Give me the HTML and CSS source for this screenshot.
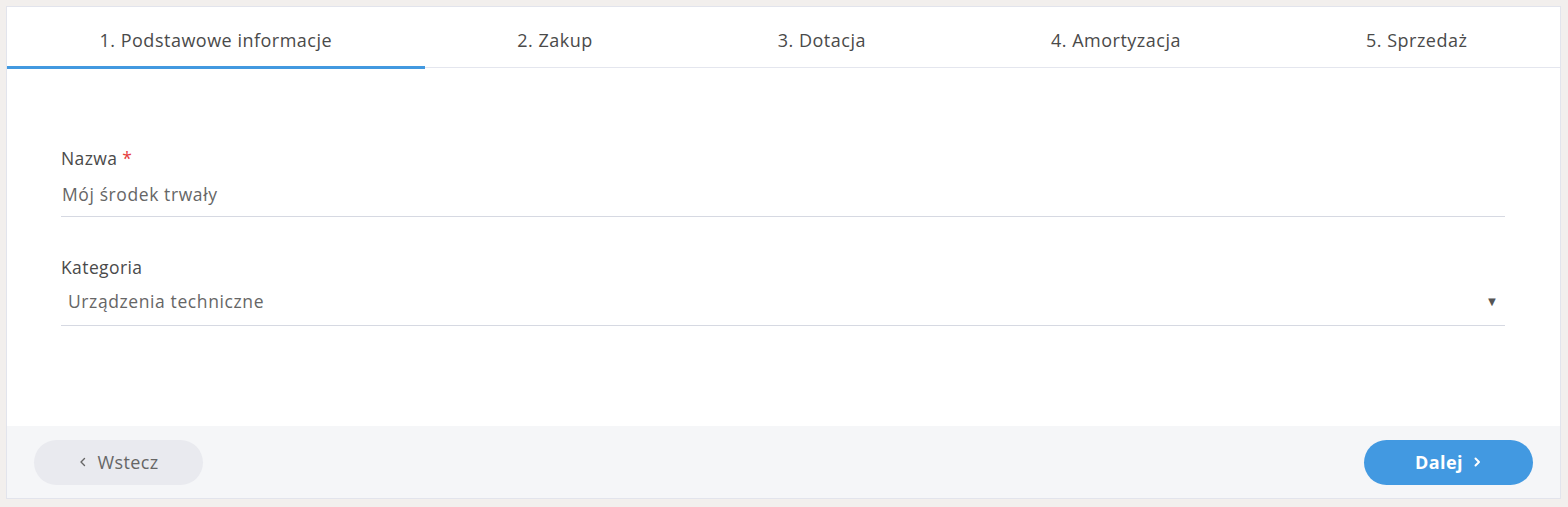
FILE: index.html
```html
<!DOCTYPE html>
<html lang="pl">
<head>
<meta charset="utf-8">
<title>Środek trwały</title>
<link rel="stylesheet" href="styles.css">
</head>
<body>
<div class="card">
  <nav class="tabs">
    <div class="tab active">1. Podstawowe informacje</div>
    <div class="tab">2. Zakup</div>
    <div class="tab">3. Dotacja</div>
    <div class="tab">4. Amortyzacja</div>
    <div class="tab">5. Sprzedaż</div>
  </nav>
  <div class="content">
    <div class="field">
      <div class="label">Nazwa <span class="req">*</span></div>
      <div class="input">Mój środek trwały</div>
    </div>
    <div class="field">
      <div class="label">Kategoria</div>
      <div class="input select"><span class="sel-val">Urządzenia techniczne</span><span class="arrow">▼</span></div>
    </div>
  </div>
  <div class="footer">
    <button class="btn back"><svg class="chev-svg" width="10" height="12" viewBox="0 0 10 12"><path d="M6.5 2.5 L3 6 L6.5 9.5" fill="none" stroke="#666" stroke-width="1.4" stroke-linecap="round" stroke-linejoin="round"/></svg> Wstecz</button>
    <button class="btn next">Dalej <svg class="chev-svg" width="10" height="12" viewBox="0 0 10 12"><path d="M3.5 2.5 L7 6 L3.5 9.5" fill="none" stroke="#fff" stroke-width="2" stroke-linecap="round" stroke-linejoin="round"/></svg></button>
  </div>
</div>
</body>
</html>
```
FILE: styles.css
```css
html, body {
  margin: 0;
  padding: 0;
}
body {
  background: #f2efed;
  padding: 6px 7px 8px 6px;
  font-family: "Open Sans", "Noto Sans", sans-serif;
  color: #555;
}
.card {
  background: #fff;
  border: 1px solid #e2e4ec;
  display: flex;
  flex-direction: column;
  height: 491px;
}
.tabs {
  display: flex;
  border-bottom: 1px solid #e4e6ee;
  height: 60px;
}
.tab {
  flex: 1 1 auto;
  text-align: center;
  font-size: 18px;
  letter-spacing: 0.5px;
  line-height: 24px;
  padding-top: 21px;
  color: #4a4a4a;
  box-sizing: border-box;
  white-space: nowrap;
}
.tab.active {
  border-bottom: 3px solid #4299e0;
  margin-bottom: -2px;
}
.content {
  flex: 1;
  padding: 78px 55px 0 54px;
}
.field {
  margin-bottom: 38px;
}
.label {
  font-size: 17.5px;
  letter-spacing: 0.4px;
  line-height: 24px;
  color: #4a4a4a;
}
.req {
  color: #e53e3e;
}
.input {
  font-size: 17.5px;
  letter-spacing: 0.6px;
  line-height: 24px;
  color: #666;
  padding: 12px 0 10px 1px;
  border-bottom: 1px solid #d6d9e2;
}
.select {
  display: flex;
  justify-content: space-between;
  align-items: center;
  padding: 10px 0 12px 7px;
}
.arrow {
  font-size: 13px;
  color: #555;
  margin-right: 6px;
}
.footer {
  background: #f5f6f8;
  display: flex;
  justify-content: space-between;
  align-items: center;
  padding: 0 27px;
  height: 72px;
}
.btn {
  width: 169px;
  height: 45px;
  border: none;
  border-radius: 23px;
  font-family: inherit;
  font-size: 18px;
  letter-spacing: 0.4px;
  display: flex;
  align-items: center;
  justify-content: center;
  gap: 9px;
}
.back {
  background: #e9eaef;
  color: #666;
}
.next {
  background: #4299e1;
  color: #fff;
  font-weight: 700;
}
```
